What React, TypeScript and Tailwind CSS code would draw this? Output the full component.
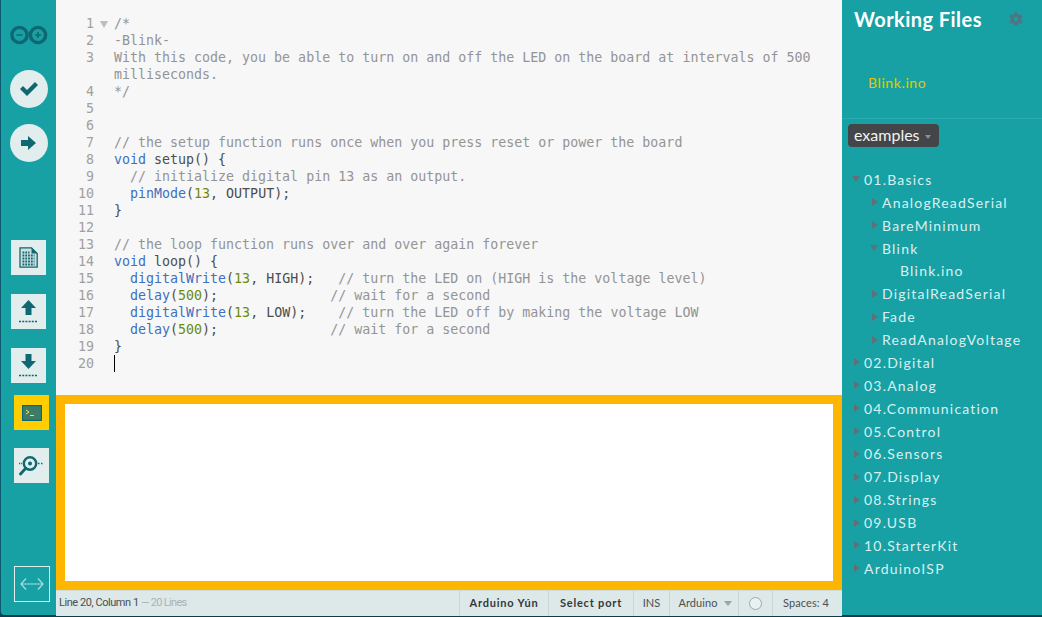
import React from "react";
import { FaCog } from "react-icons/fa";

const C = ({ children }: { children: React.ReactNode }) => <span className="text-[#949494]">{children}</span>;
const K = ({ children }: { children: React.ReactNode }) => <span className="text-[#3f6fc0]">{children}</span>;
const N = ({ children }: { children: React.ReactNode }) => <span className="text-[#6f8a00]">{children}</span>;

const lines: React.ReactNode[] = [
  <C>/*</C>,
  <C>-Blink-</C>,
  <C>With this code, you be able to turn on and off the LED on the board at intervals of 500 milliseconds.</C>,
  <C>*/</C>,
  "",
  "",
  <C>// the setup function runs once when you press reset or power the board</C>,
  <><K>void</K> setup() {"{"}</>,
  <C>{"  // initialize digital pin 13 as an output."}</C>,
  <>{"  "}<K>pinMode</K>(<N>13</N>, OUTPUT);</>,
  "}",
  "",
  <C>// the loop function runs over and over again forever</C>,
  <><K>void</K> loop() {"{"}</>,
  <>{"  "}<K>digitalWrite</K>(<N>13</N>, HIGH);<C>{"   // turn the LED on (HIGH is the voltage level)"}</C></>,
  <>{"  "}<K>delay</K>(<N>500</N>);<C>{"              // wait for a second"}</C></>,
  <>{"  "}<K>digitalWrite</K>(<N>13</N>, LOW);<C>{"    // turn the LED off by making the voltage LOW"}</C></>,
  <>{"  "}<K>delay</K>(<N>500</N>);<C>{"              // wait for a second"}</C></>,
  "}",
  "",
];

const Logo = () => (
  <svg width="38" height="20" viewBox="0 0 38 20" fill="none">
    <circle cx="9.5" cy="10" r="7.6" stroke="#0f6871" strokeWidth="3.4" />
    <circle cx="28" cy="10" r="7.6" stroke="#0f6871" strokeWidth="3.4" />
    <path d="M6.5 10h6M25 10h6M28 7v6" stroke="#0f6871" strokeWidth="1.7" />
  </svg>
);

const Round = ({ children, cls }: { children: React.ReactNode; cls: string }) => (
  <div className={`w-[38px] h-[38px] rounded-full bg-[#e2eded] flex items-center justify-center ml-[9px] ${cls}`}>{children}</div>
);

const Square = ({ children, cls }: { children: React.ReactNode; cls: string }) => (
  <div className={`w-[35px] h-[35px] flex items-center justify-center ${cls}`}>{children}</div>
);

const Dots = () => <path d="M1 21.5h19" stroke="#0f6871" strokeWidth="1.3" strokeDasharray="2 1.2" />;

type Row = { t: string; l: 0 | 1 | 2; o?: boolean; f?: boolean };
const tree: Row[] = [
  { t: "01.Basics", l: 0, o: true },
  { t: "AnalogReadSerial", l: 1 },
  { t: "BareMinimum", l: 1 },
  { t: "Blink", l: 1, o: true },
  { t: "Blink.ino", l: 2, f: true },
  { t: "DigitalReadSerial", l: 1 },
  { t: "Fade", l: 1 },
  { t: "ReadAnalogVoltage", l: 1 },
  { t: "02.Digital", l: 0 },
  { t: "03.Analog", l: 0 },
  { t: "04.Communication", l: 0 },
  { t: "05.Control", l: 0 },
  { t: "06.Sensors", l: 0 },
  { t: "07.Display", l: 0 },
  { t: "08.Strings", l: 0 },
  { t: "09.USB", l: 0 },
  { t: "10.StarterKit", l: 0 },
  { t: "ArduinoISP", l: 0 },
];

const Status = ({ children, w, cls = "" }: { children?: React.ReactNode; w: string; cls?: string }) => (
  <div className={`h-full border-l border-[#c9d6d6] flex items-center justify-center shrink-0 ${w} ${cls}`}>{children}</div>
);

export default function App() {
  return (
    <div className="w-[1042px] h-[617px] overflow-hidden flex bg-[#0b3d4c] font-['Lato','Open_Sans',sans-serif]">
      {/* left toolbar */}
      <div className="w-[56px] h-[615px] shrink-0 bg-[#17a1a5] border-l border-[#0b5a70] rounded-bl-[4px] flex flex-col relative">
        <div className="mt-[25px] ml-[9px]"><Logo /></div>
        <Round cls="mt-[25px]">
          <svg width="20" height="16" viewBox="0 0 20 16"><path d="M1 8l3-3 4 4 8-8 3 3L8 15z" fill="#0f6871" /></svg>
        </Round>
        <Round cls="mt-[16px]">
          <svg width="16" height="14" viewBox="0 0 16 14"><path d="M0 4h7V0l8 7-8 7v-4H0z" fill="#0f6871" /></svg>
        </Round>
        <Square cls="bg-[#e2eded] ml-[10px] mt-[78px]">
          <svg width="19" height="21" viewBox="0 0 19 21" fill="none">
            <path d="M1 .8h11.5l5.7 5.7v13.7H1z" fill="#cfdede" stroke="#0f6871" strokeWidth="1.3" />
            <path d="M12.5.8v5.7h5.7z" fill="#0f6871" />
            <path d="M3.5 5.5h7M3.5 8.5h12M3.5 11.5h12M3.5 14.5h12M3.5 17.5h12" stroke="#0f6871" strokeWidth="1.8" strokeDasharray="1.8 1" />
          </svg>
        </Square>
        <Square cls="bg-[#e2eded] ml-[10px] mt-[19px]">
          <svg width="21" height="23" viewBox="0 0 21 23" fill="none">
            <path d="M10.5 0l7.5 8h-4.5v7h-6V8H3z" fill="#0f6871" /><Dots />
          </svg>
        </Square>
        <Square cls="bg-[#e2eded] ml-[10px] mt-[19px]">
          <svg width="21" height="23" viewBox="0 0 21 23" fill="none">
            <path d="M7.5 0h6v7H18l-7.5 8L3 7h4.5z" fill="#0f6871" /><Dots />
          </svg>
        </Square>
        <Square cls="bg-[#ffcd00] ml-[13px] mt-[12px]">
          <svg width="20" height="16" viewBox="0 0 20 16" fill="none">
            <rect x=".6" y=".6" width="18.8" height="14.8" fill="#3d7d67" stroke="#0f6871" strokeWidth="1.2" />
            <path d="M4 5l3 2-3 2M8 10.5h4" stroke="#ffdf40" strokeWidth="1" />
          </svg>
        </Square>
        <Square cls="bg-[#e2eded] ml-[13px] mt-[18px]">
          <svg width="26" height="21" viewBox="0 0 26 21" fill="none">
            <circle cx="11" cy="8.5" r="6.2" stroke="#0f6871" strokeWidth="2.4" />
            <circle cx="11" cy="8.5" r="2" fill="#0f6871" />
            <path d="M6.5 13.5L1.5 19" stroke="#0f6871" strokeWidth="2.8" strokeLinecap="round" />
            <path d="M19 8.5h6" stroke="#0f6871" strokeWidth="1.3" strokeDasharray="1.5 1.5" />
            <path d="M0 8.5h3" stroke="#0f6871" strokeWidth="1.3" strokeDasharray="1.2 1" />
          </svg>
        </Square>
        <div className="w-[36px] h-[36px] border border-[#e2eded] ml-[13px] mt-[83px] flex items-center justify-center">
          <svg width="24" height="14" viewBox="0 0 24 14" fill="none" stroke="#a9dcdc" strokeWidth="1.2">
            <path d="M1 7h22M6 1.5L1 7l5 5.5M18 1.5L23 7l-5 5.5" />
          </svg>
        </div>
      </div>

      {/* center */}
      <div className="w-[786px] shrink-0 flex flex-col h-[616px]">
        <div className="h-[395px] shrink-0 bg-[#f7f7f7] pt-[15px] font-['DejaVu_Sans_Mono',monospace] text-[13.3px] leading-[17px] text-[#4d4d4d]">
          {lines.map((l, i) => (
            <div key={i} className="flex">
              <div className="w-[38px] text-right text-[#a0a0a0] shrink-0">{i + 1}</div>
              <div className="w-[20px] shrink-0 flex justify-center pt-[6px]">
                {i === 0 && <div className="w-0 h-0 border-l-[4px] border-r-[4px] border-t-[7px] border-l-transparent border-r-transparent border-t-[#bdbdbd]" />}
              </div>
              <div className="w-[704px] whitespace-pre-wrap relative">
                {l === "" ? "\u00a0" : l}
                {i === 19 && <div className="absolute left-0 top-0 w-px h-[17px] bg-black" />}
              </div>
            </div>
          ))}
        </div>
        <div className="flex-1 bg-white border-[9px] border-[#ffb600]" />
        <div className="h-[26px] shrink-0 bg-[#dde8e8] flex items-center border-t border-[#cfdcdc] text-[11px] text-[#4a4f52]">
          <div className="w-[403px] pl-[3px] shrink-0 font-['Roboto',sans-serif] text-[11px] tracking-[-0.45px]">
            Line 20, Column 1 <span className="text-[#a9b3b3] tracking-[-0.7px]">— 20 Lines</span>
          </div>
          <Status w="w-[89px]" cls="font-bold tracking-[0.8px] text-[#33383b]">Arduino Yún</Status>
          <Status w="w-[85px]" cls="font-bold tracking-[0.8px] text-[#33383b]">Select port</Status>
          <Status w="w-[36px]">INS</Status>
          <Status w="w-[69px]" cls="gap-[6px] tracking-[0.1px] pl-[2px]">
            Arduino
            <span className="w-0 h-0 border-l-[4px] border-r-[4px] border-t-[5px] border-l-transparent border-r-transparent border-t-[#9aa5a5]" />
          </Status>
          <Status w="w-[34px]"><span className="w-[13px] h-[13px] rounded-full border border-[#9fabab] bg-[#e8f0f0]" /></Status>
          <Status w="w-[70px]" cls="tracking-[0.1px] pr-[3px]">Spaces:&nbsp;4</Status>
        </div>
      </div>

      {/* right panel */}
      <div className="flex-1 h-[615px] bg-[#17a1a5] flex flex-col">
        <div className="h-[119px] shrink-0 border-b border-[#2bacb0]">
          <div className="flex items-center justify-between pl-[12px] pr-[19px] pt-[4px] h-[34px]">
            <span className="text-white font-bold text-[20px] tracking-[0.45px]">Working Files</span>
            <FaCog className="text-[#4f7580] text-[14px]" />
          </div>
          <div className="mt-[39px] ml-[26px] text-[#ebc400] text-[14px] tracking-[0.6px] leading-[20px]">Blink.ino</div>
        </div>
        <div className="ml-[6px] mt-[5px] w-[91px] h-[23px] rounded-[4px] bg-[#434548] text-[#f2f2f2] text-[16px] flex items-center pl-[6px] gap-[5px] pb-[2px]">
          examples
          <span className="w-0 h-0 border-l-[3px] border-r-[3px] border-t-[4px] mt-[5px] border-l-transparent border-r-transparent border-t-[#8a9496]" />
        </div>
        <div className="mt-[21px]">
          {tree.map((r) => (
            <div
              key={r.t + r.l}
              className={`h-[22.88px] flex items-center text-[14px] tracking-[1.2px] text-[#d9f0f0] ${
                r.l === 0 ? "pl-[10px]" : r.l === 1 ? "pl-[28px]" : "pl-[58px]"
              }`}
            >
              {!r.f &&
                (r.o ? (
                  <span className="w-0 h-0 mr-[4px] border-l-[4px] border-r-[4px] border-t-[6px] border-l-transparent border-r-transparent border-t-[#5e7078]" />
                ) : (
                  <span className="w-0 h-0 ml-[2px] mr-[4px] border-t-[4px] border-b-[4px] border-l-[6px] border-t-transparent border-b-transparent border-l-[#5e7078]" />
                ))}
              {r.t}
            </div>
          ))}
        </div>
      </div>
    </div>
  );
}
